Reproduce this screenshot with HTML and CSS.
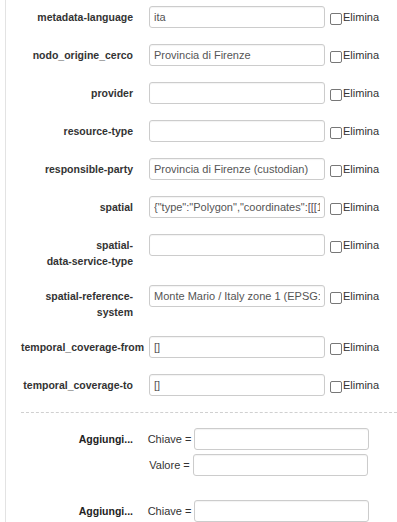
FILE: index.html
```html
<!DOCTYPE html>
<html lang="it">
<head>
  <meta charset="UTF-8">
  <title>Campi extra</title>
  <link rel="stylesheet" href="styles.css">
</head>
<body>
  <div class="form">
    <div class="row">
      <label class="ctl-label">metadata-language</label>
      <input class="txt" type="text" value="ita">
      <label class="del"><input type="checkbox"><span>Elimina</span></label>
    </div>
    <div class="row">
      <label class="ctl-label">nodo_origine_cerco</label>
      <input class="txt" type="text" value="Provincia di Firenze">
      <label class="del"><input type="checkbox"><span>Elimina</span></label>
    </div>
    <div class="row">
      <label class="ctl-label">provider</label>
      <input class="txt" type="text" value="">
      <label class="del"><input type="checkbox"><span>Elimina</span></label>
    </div>
    <div class="row">
      <label class="ctl-label">resource-type</label>
      <input class="txt" type="text" value="">
      <label class="del"><input type="checkbox"><span>Elimina</span></label>
    </div>
    <div class="row">
      <label class="ctl-label">responsible-party</label>
      <input class="txt" type="text" value="Provincia di Firenze (custodian)">
      <label class="del"><input type="checkbox"><span>Elimina</span></label>
    </div>
    <div class="row">
      <label class="ctl-label">spatial</label>
      <input class="txt" type="text" value='{"type":"Polygon","coordinates":[[[11.0,43.4],[11.8,43.4],[11.8,44.2]]]}'>
      <label class="del"><input type="checkbox"><span>Elimina</span></label>
    </div>
    <div class="row">
      <label class="ctl-label">spatial-<br>data-service-type</label>
      <input class="txt" type="text" value="">
      <label class="del"><input type="checkbox"><span>Elimina</span></label>
    </div>
    <div class="row">
      <label class="ctl-label">spatial-reference-<br>system</label>
      <input class="txt" type="text" value="Monte Mario / Italy zone 1 (EPSG:3003)">
      <label class="del"><input type="checkbox"><span>Elimina</span></label>
    </div>
    <div class="row">
      <label class="ctl-label">temporal_coverage-from</label>
      <input class="txt" type="text" value="[]">
      <label class="del"><input type="checkbox"><span>Elimina</span></label>
    </div>
    <div class="row">
      <label class="ctl-label">temporal_coverage-to</label>
      <input class="txt" type="text" value="[]">
      <label class="del"><input type="checkbox"><span>Elimina</span></label>
    </div>

    <div class="sep"></div>

    <div class="row extra">
      <span class="ctl-label">Aggiungi...</span>
      <div class="kv">
        <div class="kv-line"><span>Chiave =</span><input class="txt kv-in" type="text"></div>
        <div class="kv-line"><span>Valore =</span><input class="txt kv-in" type="text"></div>
      </div>
    </div>
    <div class="row extra">
      <span class="ctl-label">Aggiungi...</span>
      <div class="kv">
        <div class="kv-line"><span>Chiave =</span><input class="txt kv-in" type="text"></div>
        <div class="kv-line"><span>Valore =</span><input class="txt kv-in" type="text"></div>
      </div>
    </div>
  </div>
</body>
</html>
```

FILE: styles.css
```css
body {
  margin: 0;
  font-family: "Liberation Sans", Arial, sans-serif;
  font-size: 11px;
  color: #333;
  background: #fff;
}
.form {
  margin-left: 5px;
  padding: 6px 0 0 15px;
  border-left: 1px solid #e3e3e3;
  min-height: 100vh;
  box-sizing: border-box;
}
.row {
  display: flex;
  align-items: flex-start;
  margin-bottom: 16px;
}
.ctl-label {
  flex: none;
  width: 112px;
  padding-top: 3px;
  margin-right: 16px;
  text-align: right;
  white-space: nowrap;
  font-size: 10.5px;
  font-weight: bold;
  line-height: 16px;
  color: #333;
}
.txt {
  flex: none;
  box-sizing: border-box;
  width: 176px;
  height: 22px;
  margin: 0;
  padding: 0 4px;
  border: 1px solid #ccc;
  border-radius: 3px;
  font-family: "Liberation Sans", Arial, sans-serif;
  font-size: 11px;
  color: #555;
  background: #fff;
  box-shadow: inset 0 1px 1px rgba(0,0,0,0.05);
}
.del {
  display: flex;
  align-items: flex-start;
  color: #333;
}
.del input {
  appearance: none;
  -webkit-appearance: none;
  width: 12px;
  height: 12px;
  margin: 7px 1px 0 5px;
  border: 1px solid #777;
  border-radius: 2px;
  background: #fff;
}
.del span {
  padding-top: 3px;
  line-height: 16px;
}
.sep {
  border-top: 1px dashed #d0d0d0;
  margin: 0 0 15px 0;
}
.extra {
  margin-bottom: 20px;
}
.extra .ctl-label {
  color: #222;
  margin-right: 13px;
}
.kv {
  width: 225px;
}
.kv-line {
  display: flex;
  justify-content: center;
  align-items: center;
  gap: 3px;
  margin-bottom: 4px;
  color: #333;
}
.kv-in {
  width: 175px;
}
```
